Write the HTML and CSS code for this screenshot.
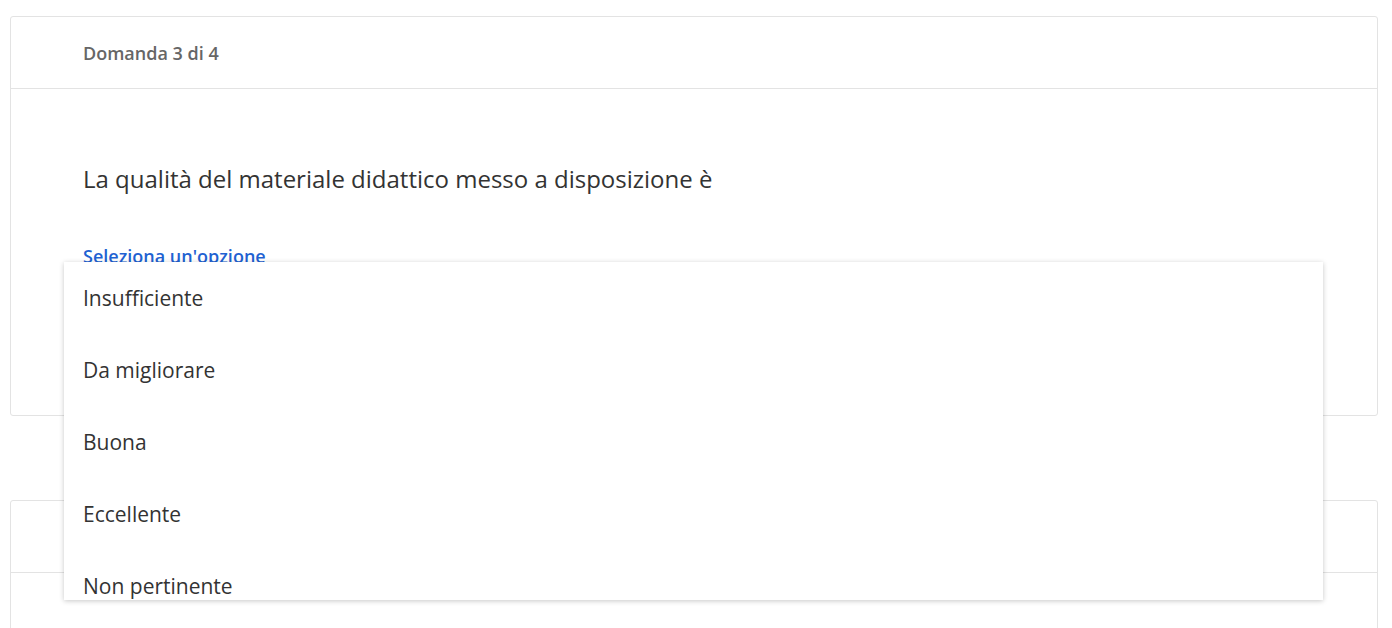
FILE: index.html
```html
<!DOCTYPE html>
<html lang="it">
<head>
<meta charset="utf-8">
<title>Domanda 3 di 4</title>
<link rel="stylesheet" href="styles.css">
</head>
<body>
<div class="page">
  <section class="card">
    <header class="card-head">Domanda 3 di 4</header>
    <div class="card-body">
      <p class="question">La qualità del materiale didattico messo a disposizione è</p>
      <div class="field">
        <span class="field-label">Seleziona un'opzione</span>
        <ul class="menu">
          <li class="option">Insufficiente</li>
          <li class="option">Da migliorare</li>
          <li class="option">Buona</li>
          <li class="option">Eccellente</li>
          <li class="option">Non pertinente</li>
        </ul>
      </div>
    </div>
  </section>
  <section class="card">
    <header class="card-head"></header>
    <div class="card-body"></div>
  </section>
</div>
</body>
</html>
```
FILE: styles.css
```css
html, body {
  margin: 0;
  padding: 0;
  background: #fff;
  overflow: hidden;
}
body {
  font-family: "Open Sans", "Noto Sans", sans-serif;
  color: #333;
}
.page {
  padding: 16px 14px 0 10px;
  display: flex;
  flex-direction: column;
  gap: 84px;
}
.card {
  border: 1px solid #e3e3e3;
  border-radius: 3px;
  background: #fff;
}
.card-head {
  height: 71px;
  border-bottom: 1px solid #e3e3e3;
  display: flex;
  align-items: center;
  padding-left: 72px;
  font-size: 18px;
  font-weight: 600;
  color: #666;
}
.card-body {
  padding: 74px 72px 0;
  height: 326px;
  box-sizing: border-box;
}
.question {
  margin: 0;
  font-size: 24px;
  line-height: 32px;
  color: #333;
}
.field {
  position: relative;
  margin-top: 49px;
}
.field-label {
  display: block;
  font-size: 18px;
  font-weight: 600;
  line-height: 24px;
  color: #1f62d2;
}
.menu {
  position: absolute;
  top: 18px;
  left: -19px;
  width: 1259px;
  height: 338px;
  margin: 0;
  padding: 0;
  list-style: none;
  background: #fff;
  box-shadow: 0 1px 5px rgba(0, 0, 0, 0.22);
  overflow: hidden;
  z-index: 2;
}
.option {
  height: 72px;
  display: flex;
  align-items: center;
  padding-left: 19px;
  font-size: 21px;
  color: #333;
}
```
